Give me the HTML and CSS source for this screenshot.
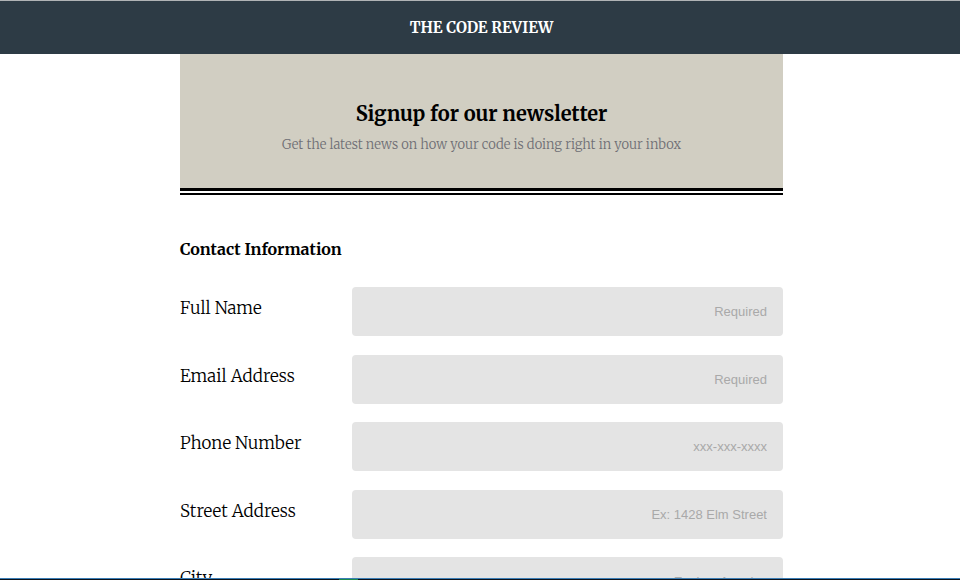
FILE: index.html
```html
<!DOCTYPE html>
<html lang="en">
<head>
<meta charset="utf-8">
<title>The Code Review</title>
<link rel="stylesheet" href="styles.css">
</head>
<body>
<header class="site-header">The Code Review</header>
<main class="page">
  <section class="banner">
    <h1 class="banner-title">Signup for our newsletter</h1>
    <p class="banner-text">Get the latest news on how your code is doing right in your inbox</p>
  </section>
  <form class="signup">
    <h2 class="section-title">Contact Information</h2>
    <div class="fields">
      <div class="field">
        <label for="name">Full Name</label>
        <input id="name" type="text" placeholder="Required">
      </div>
      <div class="field">
        <label for="email">Email Address</label>
        <input id="email" type="email" placeholder="Required">
      </div>
      <div class="field">
        <label for="phone">Phone Number</label>
        <input id="phone" type="tel" placeholder="xxx-xxx-xxxx">
      </div>
      <div class="field">
        <label for="street">Street Address</label>
        <input id="street" type="text" placeholder="Ex: 1428 Elm Street">
      </div>
      <div class="field">
        <label for="city">City</label>
        <input id="city" type="text" placeholder="Ex: Los Angeles">
      </div>
    </div>
  </form>
</main>
<div class="bottom-edge"><span class="bottom-mark"></span></div>
</body>
</html>
```
FILE: styles.css
```css
* {
  box-sizing: border-box;
}

html {
  height: 100%;
  overflow: hidden;
}

body {
  height: 100%;
  margin: 0;
  overflow: hidden;
  background: #fff;
  color: #000;
  font-family: Merriweather, "DejaVu Serif Condensed", "DejaVu Serif", serif;
  font-weight: 300;
}

.site-header {
  padding: 15px 0 14px 3px;
  border-top: 1px solid #b0b3b5;
  background: #2d3b45;
  color: #fff;
  font-size: 15px;
  font-weight: 700;
  line-height: 24px;
  text-align: center;
  text-transform: uppercase;
}

.page {
  padding-left: 3px;
}

.banner,
.signup {
  max-width: 603px;
  margin: 0 auto;
}

.banner {
  padding: 44px 16px 32px;
  border-bottom: 3px solid #000;
  background: #d1cec2;
  box-shadow: 0 2px #fff, 0 4px #000;
  text-align: center;
}

.banner-title {
  margin: 0;
  font-size: 20px;
  line-height: 32px;
}

.banner-text {
  margin: 4px 0 0;
  color: #6f6f75;
  font-size: 13px;
  line-height: 22px;
}

.section-title {
  margin: 46px 0 26px;
  font-size: 16px;
  line-height: 24px;
}

.field {
  display: grid;
  grid-template-columns: 2fr 5fr;
  align-items: start;
  margin-bottom: 19px;
}

.field:nth-child(even) {
  margin-bottom: 18px;
}

.field label {
  padding-top: 9px;
  font-size: 17px;
  line-height: 24px;
}

.field input {
  width: 100%;
  height: 49px;
  padding: 0 16px;
  border: 0;
  border-radius: 4px;
  background: #e4e4e4;
  color: #333;
  font-family: "Liberation Sans", Arial, sans-serif;
  font-size: 13px;
  text-align: right;
}

.field input::placeholder {
  color: #a9a9a9;
  opacity: 1;
}

.bottom-edge {
  position: fixed;
  right: 0;
  bottom: 0;
  left: 0;
  height: 2px;
  border-top: 1px solid #3a7db5;
  background: #0b111b;
}

.bottom-mark {
  display: block;
  width: 19px;
  height: 1px;
  margin-left: 339px;
  background: #1c8a4b;
}
```
